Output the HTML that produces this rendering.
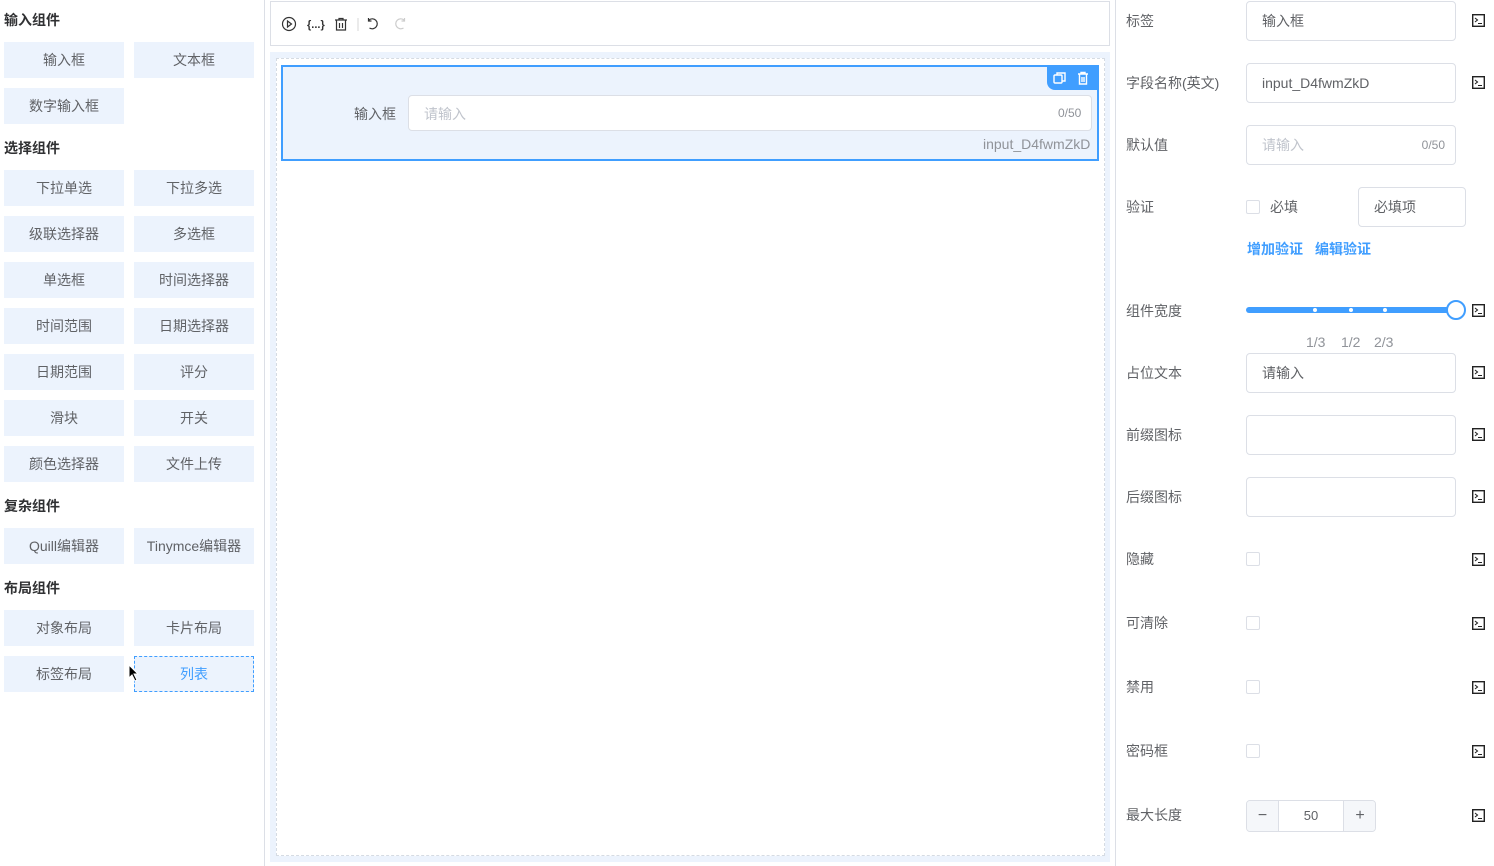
<!DOCTYPE html>
<html><head><meta charset="utf-8"><style>
*{box-sizing:border-box;margin:0;padding:0}
body{width:1494px;height:866px;background:#fff;font-family:"Liberation Sans","Noto Sans CJK SC",sans-serif;font-size:14px;color:#606266;position:relative;overflow:hidden}
.a{position:absolute}
.t{font-weight:bold;color:#303133;font-size:14px}
.b{position:absolute;width:120px;height:36px;background:#ecf3fd;text-align:center;line-height:36px;color:#606266;font-size:14px}
.lbl{position:absolute;left:1126px;font-size:14px;color:#606266}
.inp{position:absolute;left:1246px;width:210px;height:40px;border:1px solid #dcdfe6;border-radius:4px;line-height:38px;padding-left:15px;color:#606266}
.ic{position:absolute;left:1472px;width:13px;height:13px}
.cb{position:absolute;left:1246px;width:14px;height:14px;border:1px solid #dcdfe6;border-radius:2px}
</style></head><body>
<svg width="0" height="0" style="position:absolute"><defs><symbol id="tm" viewBox="0 0 13 13"><rect x="0.7" y="0.7" width="11.6" height="11.6" fill="none" stroke="#222" stroke-width="1.4"/><path d="M3 4l2.5 2L3 8M6 9.5h4" fill="none" stroke="#222" stroke-width="1.1"/></symbol></defs></svg>
<div class="a" style="left:264px;top:0;width:1px;height:866px;background:#dcdfe6"></div>
<div class="a" style="left:1115px;top:0;width:1px;height:866px;background:#dcdfe6"></div>

<div class="a t" style="left:4px;top:10px">输入组件</div>
<div class="b" style="left:4px;top:42px">输入框</div><div class="b" style="left:134px;top:42px">文本框</div>
<div class="b" style="left:4px;top:88px">数字输入框</div>
<div class="a t" style="left:4px;top:138px">选择组件</div>
<div class="b" style="left:4px;top:170px">下拉单选</div><div class="b" style="left:134px;top:170px">下拉多选</div>
<div class="b" style="left:4px;top:216px">级联选择器</div><div class="b" style="left:134px;top:216px">多选框</div>
<div class="b" style="left:4px;top:262px">单选框</div><div class="b" style="left:134px;top:262px">时间选择器</div>
<div class="b" style="left:4px;top:308px">时间范围</div><div class="b" style="left:134px;top:308px">日期选择器</div>
<div class="b" style="left:4px;top:354px">日期范围</div><div class="b" style="left:134px;top:354px">评分</div>
<div class="b" style="left:4px;top:400px">滑块</div><div class="b" style="left:134px;top:400px">开关</div>
<div class="b" style="left:4px;top:446px">颜色选择器</div><div class="b" style="left:134px;top:446px">文件上传</div>
<div class="a t" style="left:4px;top:496px">复杂组件</div>
<div class="b" style="left:4px;top:528px">Quill编辑器</div><div class="b" style="left:134px;top:528px">Tinymce编辑器</div>
<div class="a t" style="left:4px;top:578px">布局组件</div>
<div class="b" style="left:4px;top:610px">对象布局</div><div class="b" style="left:134px;top:610px">卡片布局</div>
<div class="b" style="left:4px;top:656px">标签布局</div><div class="b" style="left:134px;top:656px;border:1px dashed #409eff;color:#409eff;line-height:34px">列表</div>
<svg class="a" style="left:128px;top:664px" width="12" height="18"><path d="M1 1 L1 14 L4 11 L7 17 L9 16 L6 10 L10 10 Z" fill="#000" stroke="#fff" stroke-width="1"/></svg>

<div class="a" style="left:270px;top:1px;width:840px;height:45px;border:1px solid #dcdfe6"></div>
<svg class="a" style="left:280px;top:15px" width="130" height="18" fill="none" stroke="#333" stroke-width="1.2">
<circle cx="9" cy="9" r="6.5"/><path d="M7.5 6 L11.5 9 L7.5 12 Z"/>
<text x="27" y="13" font-size="11" fill="#333" stroke="none" font-family="Liberation Sans" font-weight="bold">{...}</text>
<path d="M55 5h12M59 5v-1.5h4V5M56.5 5v10h9V5M59.5 8v5M62.5 8v5"/>
<path d="M78 3v13" stroke="#ddd"/>
<path d="M89 5 A5 5 0 1 1 89.5 13 M88.5 3v3h3"/>
<path d="M124 5 A5 5 0 1 0 123.5 13 M124.5 3v3h-3" stroke="#ccc"/>
</svg>

<div class="a" style="left:270px;top:52px;width:840px;height:810px;background:#ecf3fd"></div>
<div class="a" style="left:276px;top:58px;width:829px;height:798px;border:1px dashed #d5dbe3;background:#fff"></div>
<div class="a" style="left:281px;top:65px;width:818px;height:96px;border:2px solid #409eff;background:#ecf3fd"></div>
<div class="a" style="left:1047px;top:67px;width:50px;height:23px;background:#409eff;border-bottom-left-radius:8px"></div>
<svg class="a" style="left:1052px;top:71px" width="42" height="16" fill="none" stroke="#fff" stroke-width="1.4"><rect x="2" y="4" width="8" height="8" rx="1"/><path d="M5 4V2h8v8h-3"/><path d="M26 3h10M29 3V1.5h4V3M27.5 3v10h7V3M30 6v5M32 6v5"/></svg>
<div class="a" style="left:354px;top:104px;color:#606266">输入框</div>
<div class="a" style="left:408px;top:95px;width:684px;height:36px;border:1px solid #dcdfe6;border-radius:4px;background:#fff"></div>
<div class="a" style="left:424px;top:104px;color:#c0c4cc">请输入</div>
<div class="a" style="left:1058px;top:106px;font-size:12px;color:#909399">0/50</div>
<div class="a" style="left:983px;top:136px;color:#909399">input_D4fwmZkD</div>

<div class="lbl" style="top:11px">标签</div><div class="inp" style="top:1px">输入框</div><svg class="ic" style="top:14px"><use href="#tm"/></svg>
<div class="lbl" style="top:73px">字段名称(英文)</div><div class="inp" style="top:63px">input_D4fwmZkD</div><svg class="ic" style="top:76px"><use href="#tm"/></svg>
<div class="lbl" style="top:135px">默认值</div><div class="inp" style="top:125px;color:#c0c4cc">请输入<span style="position:absolute;right:10px;font-size:12px;color:#909399">0/50</span></div>
<div class="lbl" style="top:197px">验证</div><div class="cb" style="top:200px"></div><div class="a" style="left:1270px;top:197px;color:#606266">必填</div>
<div class="a" style="left:1358px;top:187px;width:108px;height:40px;border:1px solid #dcdfe6;border-radius:4px;line-height:38px;padding-left:15px">必填项</div>
<div class="a" style="left:1247px;top:239px;color:#409eff;font-weight:bold">增加验证</div><div class="a" style="left:1315px;top:239px;color:#409eff;font-weight:bold">编辑验证</div>
<div class="lbl" style="top:301px">组件宽度</div>
<div class="a" style="left:1246px;top:307px;width:210px;height:6px;border-radius:3px;background:#409eff"></div>
<div class="a" style="left:1313px;top:308px;width:4px;height:4px;border-radius:2px;background:#fff"></div>
<div class="a" style="left:1349px;top:308px;width:4px;height:4px;border-radius:2px;background:#fff"></div>
<div class="a" style="left:1383px;top:308px;width:4px;height:4px;border-radius:2px;background:#fff"></div>
<div class="a" style="left:1446px;top:300px;width:20px;height:20px;border-radius:10px;background:#fff;border:2px solid #409eff"></div>
<svg class="ic" style="top:304px"><use href="#tm"/></svg>
<div class="a" style="left:1306px;top:334px;color:#909399">1/3</div><div class="a" style="left:1341px;top:334px;color:#909399">1/2</div><div class="a" style="left:1374px;top:334px;color:#909399">2/3</div>
<div class="lbl" style="top:363px">占位文本</div><div class="inp" style="top:353px">请输入</div><svg class="ic" style="top:366px"><use href="#tm"/></svg>
<div class="lbl" style="top:425px">前缀图标</div><div class="inp" style="top:415px"></div><svg class="ic" style="top:428px"><use href="#tm"/></svg>
<div class="lbl" style="top:487px">后缀图标</div><div class="inp" style="top:477px"></div><svg class="ic" style="top:490px"><use href="#tm"/></svg>
<div class="lbl" style="top:549px">隐藏</div><div class="cb" style="top:552px"></div><svg class="ic" style="top:553px"><use href="#tm"/></svg>
<div class="lbl" style="top:613px">可清除</div><div class="cb" style="top:616px"></div><svg class="ic" style="top:617px"><use href="#tm"/></svg>
<div class="lbl" style="top:677px">禁用</div><div class="cb" style="top:680px"></div><svg class="ic" style="top:681px"><use href="#tm"/></svg>
<div class="lbl" style="top:741px">密码框</div><div class="cb" style="top:744px"></div><svg class="ic" style="top:745px"><use href="#tm"/></svg>
<div class="lbl" style="top:805px">最大长度</div>
<div class="a" style="left:1246px;top:800px;width:130px;height:32px;border:1px solid #dcdfe6;border-radius:4px;overflow:hidden">
<div class="a" style="left:0;top:0;width:32px;height:30px;background:#f5f7fa;border-right:1px solid #dcdfe6;text-align:center;line-height:30px;font-size:16px">−</div>
<div class="a" style="left:32px;top:0;width:64px;height:30px;text-align:center;line-height:30px;font-size:13px;color:#606266">50</div>
<div class="a" style="left:96px;top:0;width:33px;height:30px;background:#f5f7fa;border-left:1px solid #dcdfe6;text-align:center;line-height:30px;font-size:16px">+</div>
</div>
<svg class="ic" style="top:809px"><use href="#tm"/></svg>
</body></html>
